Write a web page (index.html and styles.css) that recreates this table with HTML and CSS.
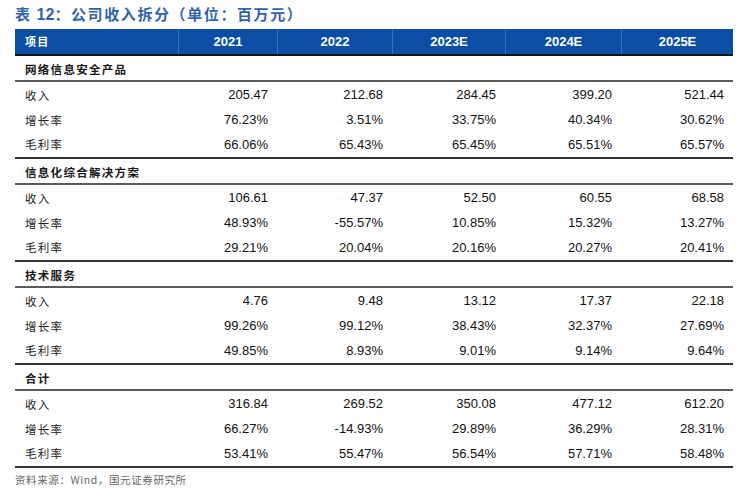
FILE: index.html
```html
<!DOCTYPE html>
<html lang="zh">
<head>
<meta charset="utf-8">
<link rel="stylesheet" href="styles.css">
</head>
<body>
<div class="page">
  <h1 class="title">表 <span class="num">12</span>：公司收入拆分（单位：百万元）</h1>
  <div class="table">
    <div class="row head">
      <div class="cell label">项目</div>
      <div class="cell">2021</div>
      <div class="cell">2022</div>
      <div class="cell">2023E</div>
      <div class="cell">2024E</div>
      <div class="cell">2025E</div>
    </div>

    <div class="row section"><div class="cell label">网络信息安全产品</div></div>
    <div class="row data"><div class="cell label">收入</div><div class="cell">205.47</div><div class="cell">212.68</div><div class="cell">284.45</div><div class="cell">399.20</div><div class="cell">521.44</div></div>
    <div class="row data"><div class="cell label">增长率</div><div class="cell">76.23%</div><div class="cell">3.51%</div><div class="cell">33.75%</div><div class="cell">40.34%</div><div class="cell">30.62%</div></div>
    <div class="row data last"><div class="cell label">毛利率</div><div class="cell">66.06%</div><div class="cell">65.43%</div><div class="cell">65.45%</div><div class="cell">65.51%</div><div class="cell">65.57%</div></div>

    <div class="row section"><div class="cell label">信息化综合解决方案</div></div>
    <div class="row data"><div class="cell label">收入</div><div class="cell">106.61</div><div class="cell">47.37</div><div class="cell">52.50</div><div class="cell">60.55</div><div class="cell">68.58</div></div>
    <div class="row data"><div class="cell label">增长率</div><div class="cell">48.93%</div><div class="cell">-55.57%</div><div class="cell">10.85%</div><div class="cell">15.32%</div><div class="cell">13.27%</div></div>
    <div class="row data last"><div class="cell label">毛利率</div><div class="cell">29.21%</div><div class="cell">20.04%</div><div class="cell">20.16%</div><div class="cell">20.27%</div><div class="cell">20.41%</div></div>

    <div class="row section"><div class="cell label">技术服务</div></div>
    <div class="row data"><div class="cell label">收入</div><div class="cell">4.76</div><div class="cell">9.48</div><div class="cell">13.12</div><div class="cell">17.37</div><div class="cell">22.18</div></div>
    <div class="row data"><div class="cell label">增长率</div><div class="cell">99.26%</div><div class="cell">99.12%</div><div class="cell">38.43%</div><div class="cell">32.37%</div><div class="cell">27.69%</div></div>
    <div class="row data last"><div class="cell label">毛利率</div><div class="cell">49.85%</div><div class="cell">8.93%</div><div class="cell">9.01%</div><div class="cell">9.14%</div><div class="cell">9.64%</div></div>

    <div class="row section"><div class="cell label">合计</div></div>
    <div class="row data"><div class="cell label">收入</div><div class="cell">316.84</div><div class="cell">269.52</div><div class="cell">350.08</div><div class="cell">477.12</div><div class="cell">612.20</div></div>
    <div class="row data"><div class="cell label">增长率</div><div class="cell">66.27%</div><div class="cell">-14.93%</div><div class="cell">29.89%</div><div class="cell">36.29%</div><div class="cell">28.31%</div></div>
    <div class="row data last"><div class="cell label">毛利率</div><div class="cell">53.41%</div><div class="cell">55.47%</div><div class="cell">56.54%</div><div class="cell">57.71%</div><div class="cell">58.48%</div></div>
  </div>
  <p class="source">资料来源：Wind，国元证券研究所</p>
</div>
</body>
</html>
```

FILE: styles.css
```css
* { box-sizing: border-box; }
html, body { margin: 0; padding: 0; background: #fff; }
body {
  font-family: "Liberation Sans", Arial, "Noto Sans CJK SC", sans-serif;
  color: #111;
}
.page {
  width: 744px;
  height: 488px;
  padding: 0 11px 0 15px;
  overflow: hidden;
}
.title {
  margin: 0;
  height: 29px;
  padding-top: 5px;
  font-family: "Noto Sans CJK SC", sans-serif;
  font-size: 15px;
  line-height: 18px;
  font-weight: 700;
  color: #3163ad;
  letter-spacing: 1.6px;
}
.title .num {
  font-family: "Liberation Sans", Arial, sans-serif;
  font-size: 16px;
  letter-spacing: 0;
}
.table { width: 718px; }
.row {
  display: grid;
  grid-template-columns: 163px 99px 115px 113px 116px 112px;
  align-items: center;
}
.cell {
  font-size: 13px;
  text-align: right;
  padding-right: 9px;
  white-space: nowrap;
}
.cell.label {
  text-align: left;
  padding-left: 10px;
  font-family: "Noto Sans CJK SC", sans-serif;
  font-size: 11.5px;
  letter-spacing: 1.3px;
  color: #222;
}
.head {
  height: 27px;
  background: #0c4ea3;
  border-bottom: 2px solid #141414;
}
.head .cell {
  height: 25px;
  line-height: 25px;
  color: #fff;
  font-weight: 700;
  text-align: center;
  padding: 0;
  border-left: 1px solid #3b6fb6;
}
.head .cell.label {
  text-align: left;
  padding-left: 10px;
  border-left: none;
  color: #fff;
  font-size: 11px;
}
.section {
  height: 26px;
  border-bottom: 2px solid #5a5a5a;
}
.section .cell.label {
  font-weight: 700;
  color: #1a1a1a;
  padding-top: 1px;
}
.data { height: 25px; }
.data.last {
  height: 27px;
  border-bottom: 2px solid #333;
  padding-bottom: 1px;
}
.source {
  margin: 5px 0 0;
  font-family: "Noto Sans CJK SC", sans-serif;
  font-size: 10.5px;
  line-height: 14px;
  color: #666;
  letter-spacing: 0.6px;
}
.source .en { font-family: "Liberation Sans", Arial, sans-serif; }
```
